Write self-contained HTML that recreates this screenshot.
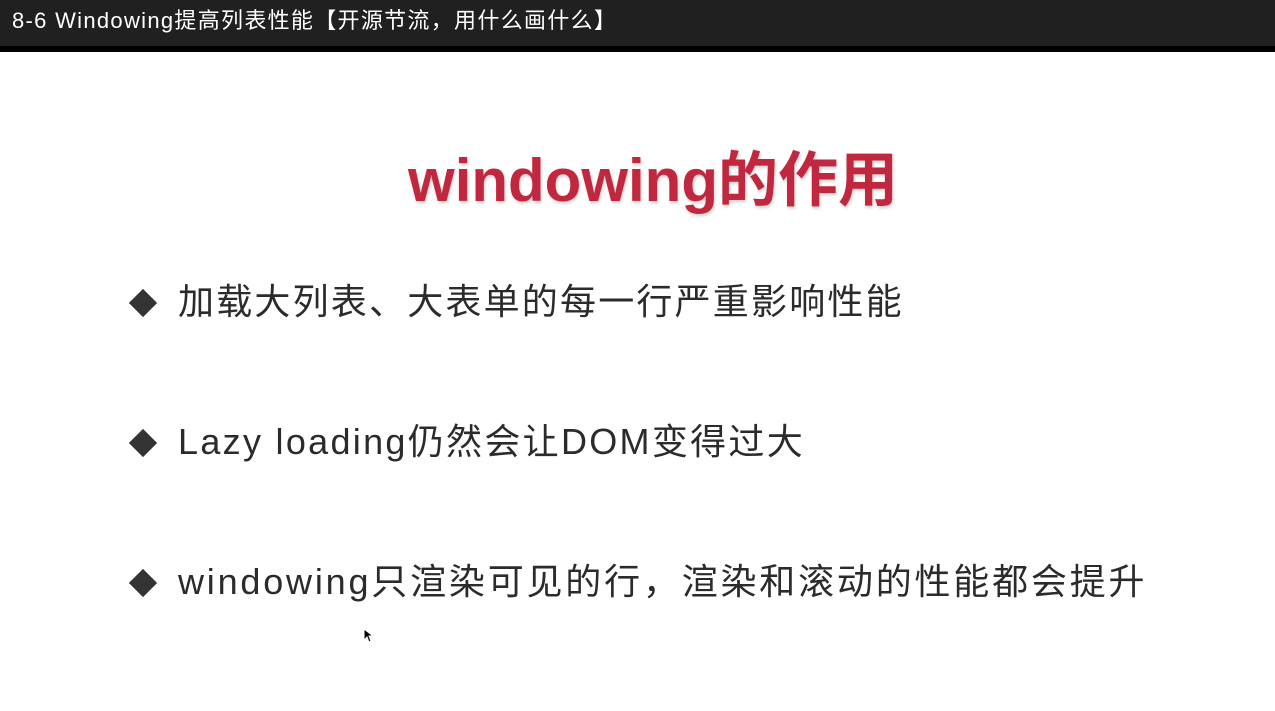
<!DOCTYPE html>
<html><head><meta charset="utf-8"><style>
*{margin:0;padding:0}
body{width:1275px;height:711px;background:#fff;position:relative;overflow:hidden;font-family:"Liberation Sans","Noto Sans CJK SC",sans-serif}
.bar{position:absolute;left:0;top:0;width:1275px;height:46px;background:#202021}
.bar2{position:absolute;left:0;top:46px;width:1275px;height:6px;background:#000}
.t{position:absolute;left:12px;top:6px;color:#fff;font-size:22px;line-height:30px;white-space:nowrap;letter-spacing:1.3px}
h1{position:absolute;left:0;width:1306px;text-align:center;top:146px;font-size:60px;line-height:70px;color:#c0283f;font-weight:bold;white-space:nowrap;text-shadow:1px 2px 3px rgba(0,0,0,.2)}
.li{position:absolute;left:178px;font-size:36px;line-height:44px;color:#2b2b2b;white-space:nowrap}
.d{position:absolute;left:133px;width:20px;height:20px;background:#333;transform:rotate(45deg)}
</style></head><body>
<div class="bar"></div><div class="bar2"></div>
<div class="t">8-6 Windowing提高列表性能【开源节流，用什么画什么】</div>
<h1>windowing的作用</h1>
<div class="d" style="top:293px"></div><div class="li" style="top:280px;letter-spacing:2.2px">加载大列表、大表单的每一行严重影响性能</div>
<div class="d" style="top:433px"></div><div class="li" style="top:420px;letter-spacing:2.3px">Lazy loading仍然会让DOM变得过大</div>
<div class="d" style="top:573px"></div><div class="li" style="top:560px;letter-spacing:2.8px">windowing只渲染可见的行，渲染和滚动的性能都会提升</div>
<svg style="position:absolute;left:363px;top:628px" width="10" height="16"><path d="M1 1 L1 12 L4 9 L6 14 L8 13 L6 8 L10 8 Z" fill="#000" stroke="#fff" stroke-width="1"/></svg>
</body></html>
